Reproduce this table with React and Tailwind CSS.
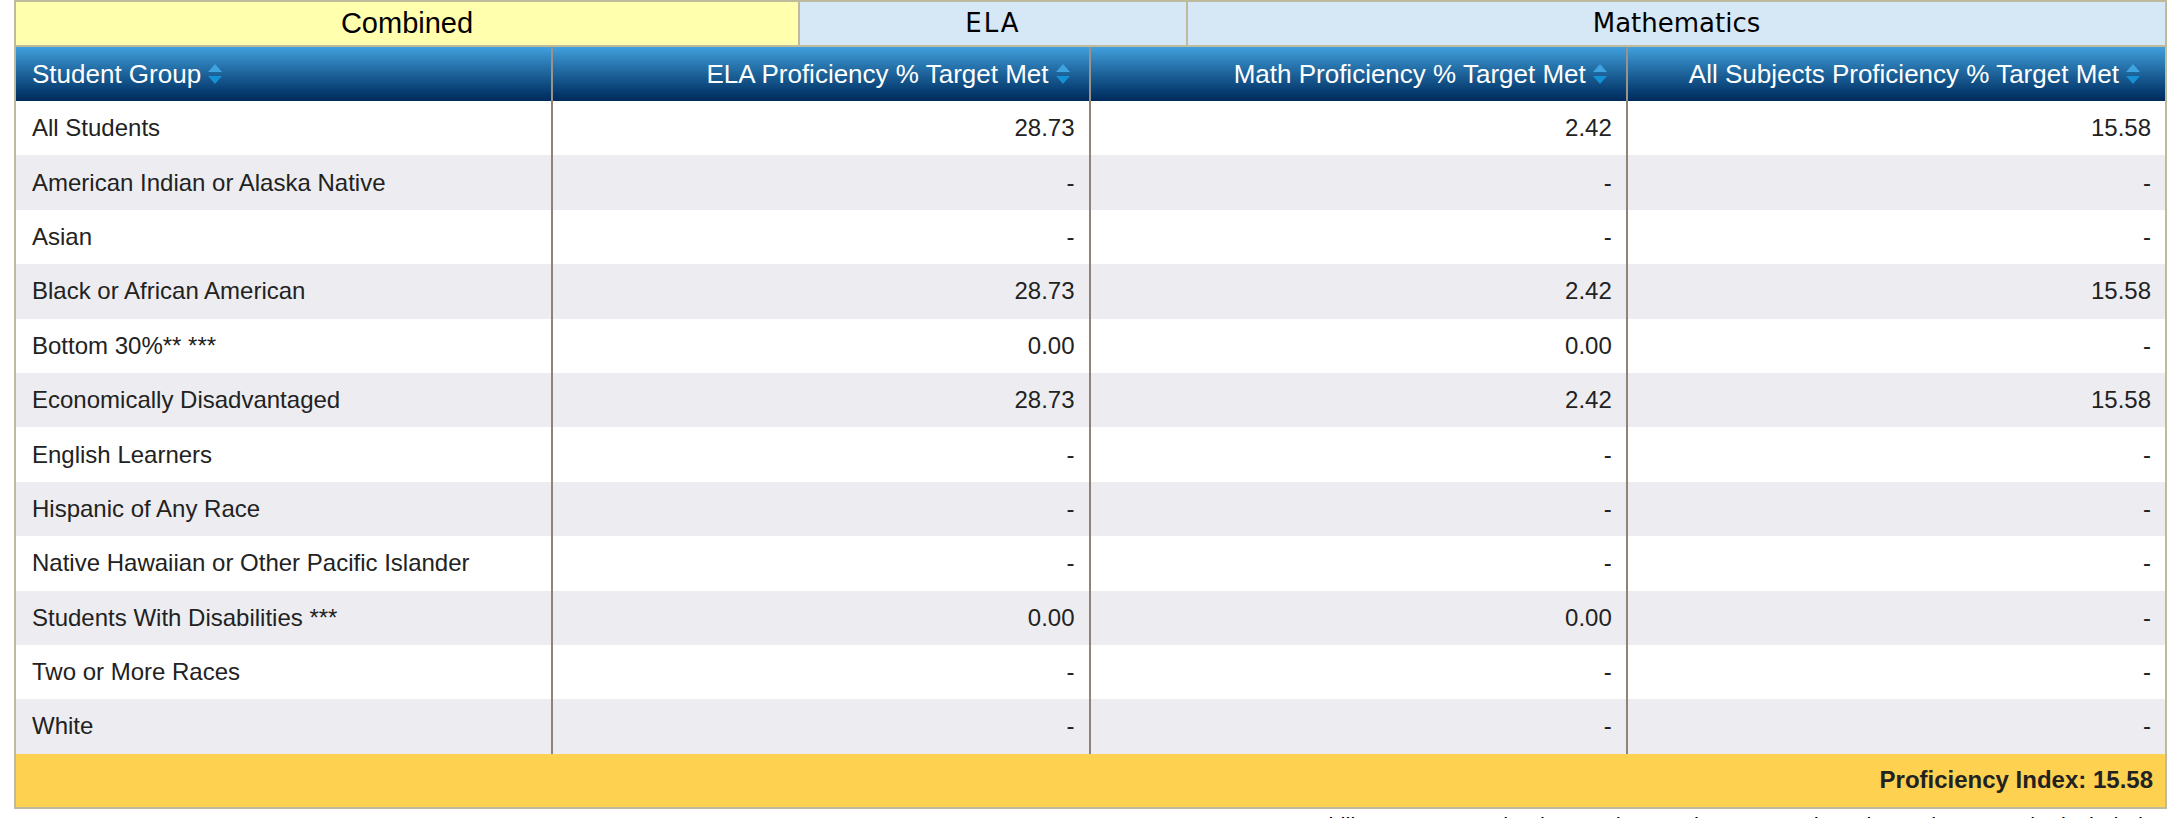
import React from "react";

const rows = [
  ["All Students", "28.73", "2.42", "15.58"],
  ["American Indian or Alaska Native", "-", "-", "-"],
  ["Asian", "-", "-", "-"],
  ["Black or African American", "28.73", "2.42", "15.58"],
  ["Bottom 30%** ***", "0.00", "0.00", "-"],
  ["Economically Disadvantaged", "28.73", "2.42", "15.58"],
  ["English Learners", "-", "-", "-"],
  ["Hispanic of Any Race", "-", "-", "-"],
  ["Native Hawaiian or Other Pacific Islander", "-", "-", "-"],
  ["Students With Disabilities ***", "0.00", "0.00", "-"],
  ["Two or More Races", "-", "-", "-"],
  ["White", "-", "-", "-"],
];

function SortIcon() {
  return (
    <svg width="16" height="24" viewBox="0 0 16 24" className="ml-[6px] shrink-0">
      <path d="M8 2 L15 10 L1 10 Z" fill="#3fa3df" />
      <path d="M1 14 L15 14 L8 22 Z" fill="#1590d4" />
    </svg>
  );
}

export default function App() {
  const font = { fontFamily: '"Liberation Sans", Arial, sans-serif' };
  const tabFont = { fontFamily: '"DejaVu Sans", sans-serif' };
  return (
    <div className="bg-white w-[2170px] h-[818px] overflow-hidden pl-[14px] pr-[3px]" style={font}>
      {/* Tabs */}
      <div className="flex h-[47px] text-black">
        <div className="w-[784px] bg-[#ffffae] border-2 border-[#bdbb9c] border-r-0 flex items-center justify-center text-[29px]">
          Combined
        </div>
        <div className="w-[388px] bg-[#d6e8f5] border-2 border-[#bdbb9c] border-r-0 flex items-center justify-center text-[26px] tracking-[2px]" style={tabFont}>
          ELA
        </div>
        <div className="flex-1 bg-[#d6e8f5] border-2 border-[#bdbb9c] flex items-center justify-center text-[26px]" style={tabFont}>
          Mathematics
        </div>
      </div>

      {/* Table */}
      <div className="border-x-2 border-b-2 border-[#bdbb9c]">
        <div className="grid grid-cols-4 h-[54px] bg-gradient-to-b from-[#41a0dc] to-[#002a5c] text-white text-[26px]">
          <div className="flex items-center pl-[16px] border-r-2 border-[#9c9288]">
            Student Group <SortIcon />
          </div>
          <div className="flex items-center justify-end pr-[18px] border-r-2 border-[#9c9288]">
            ELA Proficiency % Target Met <SortIcon />
          </div>
          <div className="flex items-center justify-end pr-[18px] border-r-2 border-[#9c9288]">
            Math Proficiency % Target Met <SortIcon />
          </div>
          <div className="flex items-center justify-end pr-[24px]">
            All Subjects Proficiency % Target Met <SortIcon />
          </div>
        </div>
        {rows.map((r, i) => (
          <div
            key={r[0]}
            className={
              "grid grid-cols-4 h-[54.4px] text-[24px] text-[#222222] " +
              (i % 2 === 1 ? "bg-[#ededf1]" : "bg-white")
            }
          >
            <div className="flex items-center pl-[16px] border-r-2 border-[#8e8378]">{r[0]}</div>
            <div className="flex items-center justify-end pr-[14px] border-r-2 border-[#8e8378]">{r[1]}</div>
            <div className="flex items-center justify-end pr-[14px] border-r-2 border-[#8e8378]">{r[2]}</div>
            <div className="flex items-center justify-end pr-[14px]">{r[3]}</div>
          </div>
        ))}
        <div className="h-[53px] bg-[#fed151] flex items-center justify-end pr-[12px] text-[24px] font-bold text-[#222222]">
          Proficiency Index: 15.58
        </div>
      </div>
      <div className="text-right pr-[18px] pt-[3px] text-[22px] text-black leading-[28px] whitespace-nowrap">
        **For accountability purposes, schools must have at least 10 students in a subgroup to be included.
      </div>
    </div>
  );
}
